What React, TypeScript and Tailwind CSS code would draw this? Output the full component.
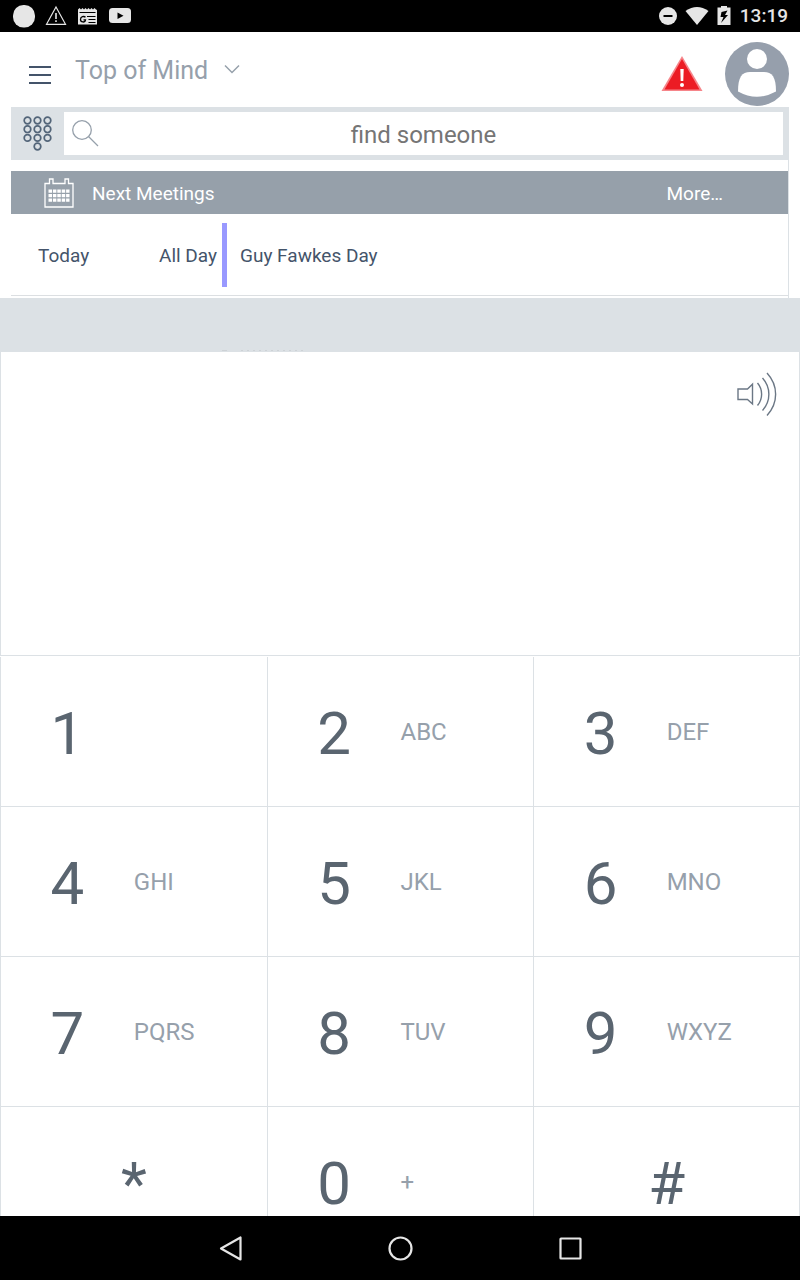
import { useState } from "react";
import type { ReactNode } from "react";

type Key = { digit: string; letters?: string };

const KEYS: Key[] = [
  { digit: "1", letters: "" },
  { digit: "2", letters: "ABC" },
  { digit: "3", letters: "DEF" },
  { digit: "4", letters: "GHI" },
  { digit: "5", letters: "JKL" },
  { digit: "6", letters: "MNO" },
  { digit: "7", letters: "PQRS" },
  { digit: "8", letters: "TUV" },
  { digit: "9", letters: "WXYZ" },
  { digit: "*" },
  { digit: "0", letters: "+" },
  { digit: "#" },
];

function StatusBar() {
  return (
    <div className="flex h-8 shrink-0 items-center justify-between bg-black pr-3 pl-[13px] text-[#e6e6e6]">
      <div className="flex items-center gap-[10px]">
        <svg width="22" height="24" viewBox="0 0 22 24" fill="currentColor">
          <rect x="0" y="1" width="22" height="22.5" rx="10.5" />
        </svg>
        <svg width="22" height="24" viewBox="0 0 22 24" fill="none" stroke="currentColor" strokeWidth="1.2">
          <path d="M11 3 20.5 20.3H1.500Z" />
          <path d="M11 9v6M11 16.300v1.800" strokeWidth="1.600" />
        </svg>
        <svg width="22" height="24" viewBox="0 0 22 24">
          <path
            fill="currentColor"
            d="M1 5.500 2.500 4 4 5.500 5.500 4 7 5.500 8.500 4 10 5.500 11.500 4 13 5.500 14.500 4 16 5.500 17.500 4 19 5.500l1 .5v14.500H1Z"
          />
          <path stroke="#000" d="M2.500 8.500h16M10 12.500h8.500M11.500 15.500h7M11.500 18.500h7" fill="none" />
          <path stroke="#000" strokeWidth="1.300" fill="none" d="M8.500 13.300c-1.500-1.500-5-.8-5 2.200s4.500 3.500 5 .3H6.500" />
        </svg>
        <svg width="22" height="24" viewBox="0 0 22 24">
          <rect x="0" y="4" width="22" height="15" rx="3.500" fill="currentColor" />
          <path d="M8.500 8.500v6.500l6-3.250Z" fill="#000" />
        </svg>
      </div>
      <div className="flex items-center">
        <svg width="18" height="18" viewBox="0 0 18 18">
          <circle cx="9" cy="9" r="9" fill="currentColor" />
          <path d="M4.500 9h9" stroke="#000" strokeWidth="2" />
        </svg>
        <svg className="ml-2" width="24" height="20" viewBox="0 0 24 20" fill="currentColor">
          <path d="M.5 5Q12-3 23.500 5L12 19Z" />
        </svg>
        <svg className="ml-2" width="14" height="20" viewBox="0 0 14 20">
          <path d="M4 0h6v1.500h3.500V19H.5V1.500H4Z" fill="currentColor" />
          <path d="M10.500 4.500 4.500 6 3.500 11h3L4 17l7-8H8Z" fill="#000" />
        </svg>
        <time className="ml-[9px] text-[19px] leading-6 font-medium">13:19</time>
      </div>
    </div>
  );
}

function Header() {
  return (
    <header className="flex h-[75px] shrink-0 items-center pr-[11px] pl-[28px]">
      <button type="button" aria-label="Menu" className="mt-[10px] text-[#44546a]">
        <svg width="23" height="20" viewBox="0 0 23 20" stroke="currentColor" strokeWidth="2">
          <path d="M1 2h22M1 10h22M1 18h22" />
        </svg>
      </button>
      <button type="button" className="mt-0.5 ml-6 flex items-center gap-4 text-[25px] leading-8 text-[#96a0ab]">
        Top of Mind
        <svg className="mb-1" width="16" height="10" viewBox="0 0 16 10" fill="none" stroke="currentColor" strokeWidth="1.500">
          <path d="M1 1.500 8 8.500 15 1.500" />
        </svg>
      </button>
      <button type="button" aria-label="Alerts" className="mt-2 ml-auto">
        <svg width="42" height="36" viewBox="0 0 42 36">
          <path d="M21 0 41.500 35H.5Z" fill="#f6858a" />
          <path d="M21 3 38.500 33.500H3.500Z" fill="#ec1c24" />
          <path d="M19.300 13h3.400l-.4 12h-2.600Z" fill="#fff" />
          <circle cx="21" cy="29" r="2" fill="#fff" />
        </svg>
      </button>
      <button type="button" aria-label="Profile" className="mt-2 ml-[22px]">
        <svg width="64" height="64" viewBox="0 0 64 64">
          <circle cx="32" cy="32" r="32" fill="#969fac" />
          <circle cx="32" cy="17" r="10" fill="#fff" />
          <path d="M13 49.500C13 35 17 30 25 30h14c8 0 12 5 12 19.500Q32 60 13 49.500Z" fill="#fff" />
        </svg>
      </button>
    </header>
  );
}

function SearchBar() {
  const dots = [0, 1, 2].flatMap((row) => [0, 1, 2].map((col) => [4.5 + col * 10, 4.5 + row * 8.7]));
  return (
    <div className="flex h-[53px] items-stretch bg-[#dce1e5] py-[5px] pr-[5px]">
      <button type="button" aria-label="Dial pad" className="flex w-[53px] items-center justify-center">
        <svg width="30" height="36" viewBox="0 0 30 36" fill="none" stroke="#536579" strokeWidth="1.700">
          {[...dots, [14.5, 30.5]].map(([x, y]) => (
            <circle key={`${x}-${y}`} cx={x} cy={y} r="3.300" />
          ))}
        </svg>
      </button>
      <label className="flex flex-1 items-center bg-white px-2">
        <svg width="28" height="28" viewBox="0 0 28 28" fill="none" stroke="#96a0ab" strokeWidth="1.300">
          <circle cx="10" cy="10" r="9.300" />
          <path d="m16.500 16.500 9.500 9.500" />
        </svg>
        <input
          type="text"
          aria-label="find someone"
          placeholder="find someone"
          className="mt-0.5 min-w-0 flex-1 bg-transparent pr-7 text-center text-[24px] leading-8 outline-none placeholder:text-[#757575]"
        />
      </label>
    </div>
  );
}

function CalendarIcon() {
  return (
    <svg className="mb-0.5" width="30" height="30" viewBox="0 0 30 30" fill="none" stroke="#fff">
      <path d="M1 5.500h4.500V1H9v4.500h12V1h3.500v4.500H29v23.500H1Z" strokeWidth="1.300" />
      <path d="M4.500 13.200h21M4.500 17.700h21M4.500 22.200h21" strokeWidth="3.300" strokeDasharray="3.500 .9" />
    </svg>
  );
}

function Meetings() {
  return (
    <section className="pt-[11px]">
      <div className="flex h-[43px] items-center bg-[#96a0aa] pt-0.5 pr-[65px] pl-[33px] text-[19px] leading-6 text-white">
        <CalendarIcon />
        <h2 className="ml-[18px]">Next Meetings</h2>
        <a href="#meetings" className="ml-auto">
          More…
        </a>
      </div>
      <div className="flex h-[82px] items-center border-b border-[#dcdfe2] text-[19px] leading-6 text-[#44546a]">
        <span className="w-[120px] pt-0.5 pl-[27px]">Today</span>
        <span className="w-[91px] pt-0.5 pr-[5px] text-right">All Day</span>
        <span className="h-16 w-[5px] bg-[#9999ff]" />
        <span className="pt-0.5 pl-[13px]">Guy Fawkes Day</span>
      </div>
    </section>
  );
}

function KeyButton({ item, onPress }: { item: Key; onPress: (digit: string) => void }) {
  const centered = item.letters === undefined;
  return (
    <button
      type="button"
      onClick={() => onPress(item.digit)}
      className="flex h-[150px] items-center border-b border-l border-[#dce1e5] text-[#5a6570] nth-[3n]:border-r"
    >
      <span className={centered ? "w-full pt-1 text-center text-[60px] leading-[60px]" : "w-1/2 pt-1 text-center text-[60px] leading-[60px]"}>
        {item.digit}
      </span>
      {!centered && <span className="text-[24px] leading-8 text-[#96a0ab]">{item.letters}</span>}
    </button>
  );
}

function Dialer() {
  const [number, setNumber] = useState("");
  return (
    <section className="flex min-h-0 flex-1 flex-col overflow-hidden border-t border-[#dce1e5] bg-white">
      <div className="flex h-[304px] shrink-0 items-start border-x border-b border-[#dce1e5] pt-[19px] pr-[21px]">
        <output className="flex-1 pl-8 text-[60px] leading-[72px] text-[#5a6570]">{number}</output>
        <button type="button" aria-label="Speaker">
          <svg width="42" height="46" viewBox="0 0 42 46" fill="none" stroke="#6b7785" strokeWidth="1.400">
            <path d="M2 18h9.500l5-4.800V33l-5-4.500H2Z" />
            <path d="M21.500 12c5.500 6.500 5.500 16 0 22.500M26.500 7c8.500 9.500 8.500 23 0 32.500M31 2c11.500 12.500 11.500 30 0 42.500" />
          </svg>
        </button>
      </div>
      <div className="grid shrink-0 grid-cols-3 pt-px">
        {KEYS.map((item) => (
          <KeyButton key={item.digit} item={item} onPress={(d) => setNumber(number + d)} />
        ))}
      </div>
    </section>
  );
}

function NavButton({ label, children }: { label: string; children: ReactNode }) {
  return (
    <button type="button" aria-label={label} className="flex w-[170px] justify-center">
      <svg width="26" height="26" viewBox="0 0 26 26" fill="none" stroke="#e6e6e6" strokeWidth="2.200" strokeLinejoin="round">
        {children}
      </svg>
    </button>
  );
}

export default function App() {
  return (
    <div className="flex h-screen flex-col overflow-hidden bg-white font-[Roboto,sans-serif]">
      <StatusBar />
      <Header />
      <main className="flex min-h-0 flex-1 flex-col">
        <div className="mr-[11px] ml-[11px] border-r border-[#dce1e5] pb-0.5">
          <SearchBar />
          <Meetings />
        </div>
        <div className="flex h-[53px] shrink-0 items-end bg-[#dce1e5] pl-[222px]">
          <svg width="86" height="2" viewBox="0 0 86 2" stroke="#cdd2d6">
            <path d="M0 1.500h5" />
            <path d="M19 1.500h66" strokeDasharray="2 4" />
          </svg>
        </div>
        <Dialer />
      </main>
      <nav className="flex h-16 shrink-0 items-center justify-center bg-black">
        <NavButton label="Back">
          <path d="M23.500 2.500v22L4 13.500Z" />
        </NavButton>
        <NavButton label="Home">
          <circle cx="13.500" cy="13.500" r="11" />
        </NavButton>
        <NavButton label="Recent apps">
          <rect x="3.500" y="3.500" width="20" height="20" rx=".5" />
        </NavButton>
      </nav>
    </div>
  );
}
